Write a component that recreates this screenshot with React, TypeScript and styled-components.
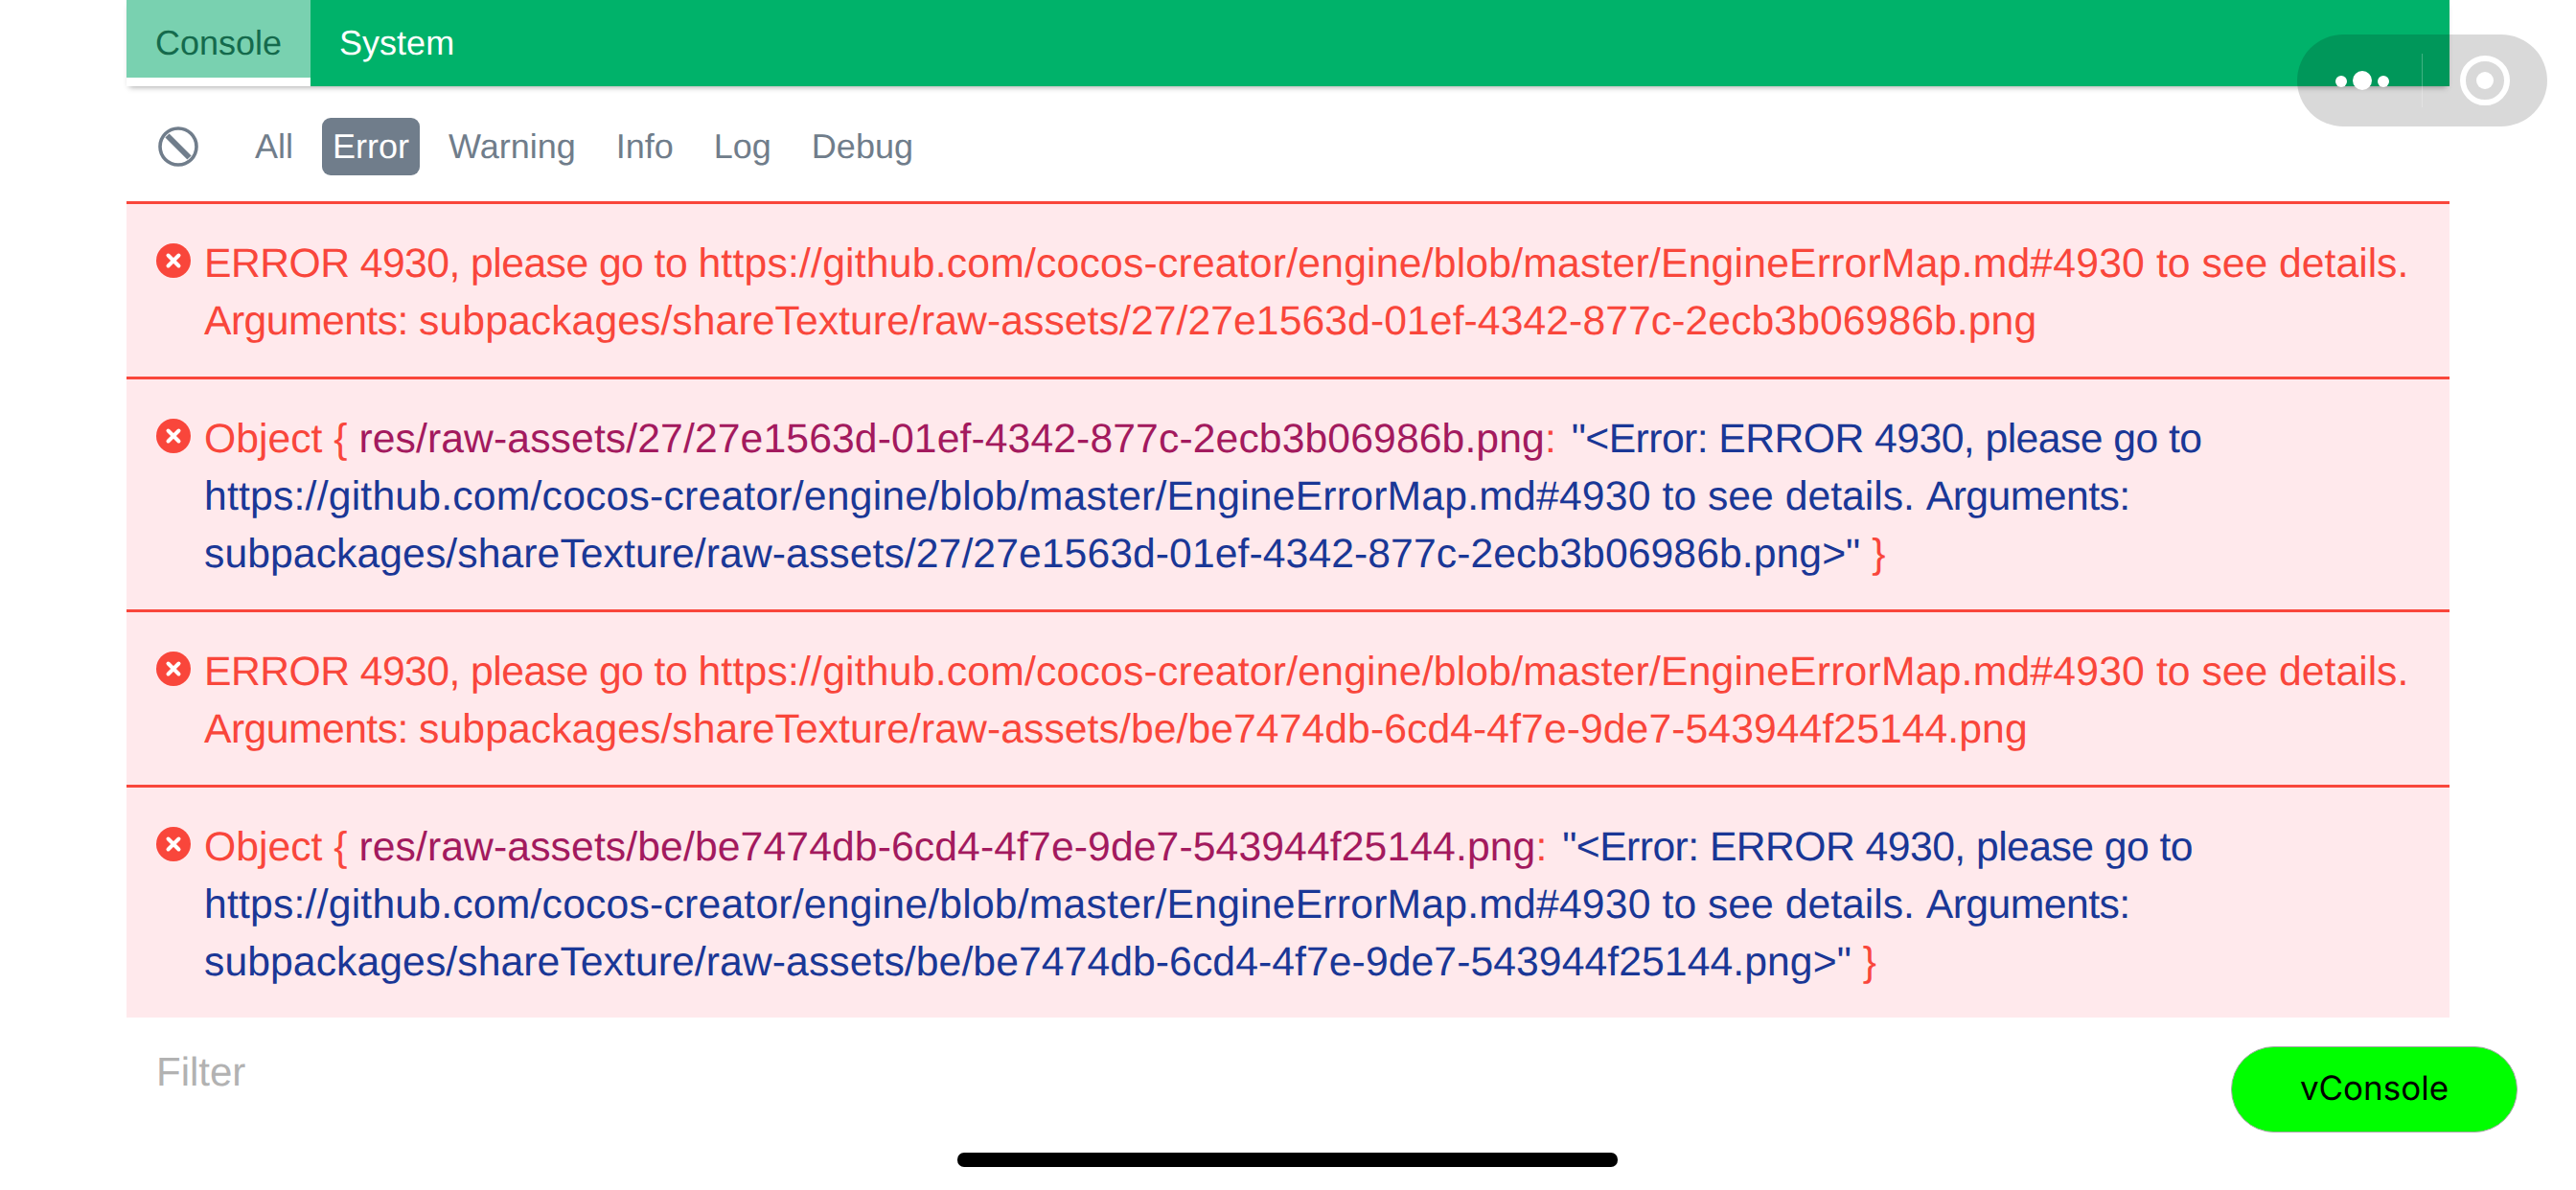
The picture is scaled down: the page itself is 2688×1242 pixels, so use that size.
import React from "react";
import styled, { createGlobalStyle } from "styled-components";

const GlobalStyle = createGlobalStyle`
  html, body {
    margin: 0;
    padding: 0;
    background: #fff;
  }
  body {
    font-family: "Liberation Sans", Arial, sans-serif;
    text-rendering: geometricPrecision;
    overflow: hidden;
  }
`;

const LEVELS = ["All", "Error", "Warning", "Info", "Log", "Debug"];
const GITHUB = "https://github.com/cocos-creator/engine/blob/master/EngineErrorMap.md#4930";

function ErrorIcon() {
  return (
    <RowIcon viewBox="0 0 36 36">
      <circle cx="18" cy="18" r="18" fill="#f9463b" />
      <path d="M12.5 12.5 L23.5 23.5 M23.5 12.5 L12.5 23.5" stroke="#fff" strokeWidth="4" strokeLinecap="round" />
    </RowIcon>
  );
}

function ClearIcon() {
  return (
    <ClearSvg viewBox="0 0 42 42">
      <circle cx="21" cy="21" r="19" fill="none" stroke="#707d8b" strokeWidth="3.6" />
      <path d="M9.5 9.5 L32.5 32.5" stroke="#707d8b" strokeWidth="6" />
    </ClearSvg>
  );
}

function PlainRow({ asset }: { asset: string }) {
  return (
    <Row>
      <ErrorIcon />
      <RowText>
        <Tight>ERROR 4930, please go to </Tight>
        <Loose>{GITHUB}</Loose> to see details.
        <br />
        <Tight>Arguments: </Tight>
        <AssetPath>subpackages/shareTexture/raw-assets/{asset}</AssetPath>
      </RowText>
    </Row>
  );
}

function ObjectRow({ asset }: { asset: string }) {
  return (
    <Row>
      <ErrorIcon />
      <RowText>
        Object {"{"} <Key>res/raw-assets/{asset}</Key>:{" "}
        <Str>
          <Tight>"&lt;Error: ERROR 4930, please go to</Tight>
          <br />
          <Loose>{GITHUB}</Loose> to see details. <Tight>Arguments:</Tight>
          <br />
          <AssetPath>subpackages/shareTexture/raw-assets/{asset}&gt;"</AssetPath>
        </Str>{" "}
        {"}"}
      </RowText>
    </Row>
  );
}

export default function App() {
  return (
    <>
      <GlobalStyle />
      <Page>
        <Panel>
          <TabBar>
            <Tab $active>Console</Tab>
            <Tab>System</Tab>
          </TabBar>
          <Toolbar>
            <ClearIcon />
            <Levels>
              {LEVELS.map((level) => (
                <Level key={level} $active={level === "Error"}>
                  {level}
                </Level>
              ))}
            </Levels>
          </Toolbar>
          <LogList>
            <PlainRow asset="27/27e1563d-01ef-4342-877c-2ecb3b06986b.png" />
            <ObjectRow asset="27/27e1563d-01ef-4342-877c-2ecb3b06986b.png" />
            <PlainRow asset="be/be7474db-6cd4-4f7e-9de7-543944f25144.png" />
            <ObjectRow asset="be/be7474db-6cd4-4f7e-9de7-543944f25144.png" />
          </LogList>
          <FilterBar>Filter</FilterBar>
        </Panel>
      </Page>

      <Capsule>
        <MenuDots viewBox="0 0 60 24">
          <circle cx="7" cy="13" r="6" fill="#fff" />
          <circle cx="29" cy="12" r="10" fill="#fff" />
          <circle cx="51" cy="13" r="6" fill="#fff" />
        </MenuDots>
        <CapsuleDivider />
        <CloseRing viewBox="0 0 52 52">
          <circle cx="26" cy="26" r="23" fill="none" stroke="#fff" strokeWidth="6" />
          <circle cx="26" cy="26" r="9" fill="#fff" />
        </CloseRing>
      </Capsule>

      <VConsoleButton>vConsole</VConsoleButton>
      <HomeIndicator />
    </>
  );
}

const Page = styled.div`
  width: 2688px;
  height: 1242px;
  padding: 0 132px;
  box-sizing: border-box;
  background: #fff;
`;

const Panel = styled.div`
  display: flex;
  flex-direction: column;
`;

const TabBar = styled.div`
  display: flex;
  height: 90px;
  background: #00b26a;
  box-shadow: 0 4px 6px -3px rgba(0, 0, 0, 0.35);
`;

const Tab = styled.div<{ $active?: boolean }>`
  box-sizing: border-box;
  padding: 0 30px;
  height: ${(p) => (p.$active ? "81px" : "90px")};
  line-height: 90px;
  font-size: 36px;
  color: ${(p) => (p.$active ? "#146a4c" : "#fff")};
  background: ${(p) => (p.$active ? "#79d1b0" : "transparent")};
  box-shadow: ${(p) => (p.$active ? "0 9px 0 #fff" : "none")};
`;

const Toolbar = styled.div`
  display: flex;
  align-items: center;
  box-sizing: border-box;
  height: 120px;
  padding: 6px 0 0 33px;
`;

const ClearSvg = styled.svg`
  width: 42px;
  height: 42px;
  flex: none;
`;

const Levels = styled.div`
  display: flex;
  margin-left: 47px;
  gap: 18px;
`;

const Level = styled.div<{ $active?: boolean }>`
  height: 60px;
  line-height: 60px;
  padding: 0 ${(p) => (p.$active ? "11px" : "12px")};
  border-radius: 9px;
  font-size: 36px;
  color: ${(p) => (p.$active ? "#fff" : "#707d8b")};
  background: ${(p) => (p.$active ? "#707d8b" : "transparent")};
`;

const LogList = styled.div`
  display: flex;
  flex-direction: column;
`;

const Row = styled.div`
  display: flex;
  align-items: flex-start;
  padding: 30px 30px 30px 31px;
  border-top: 3px solid #f9463b;
  background: #ffe9ec;
`;

const RowIcon = styled.svg`
  width: 36px;
  height: 36px;
  flex: none;
  margin-top: 11px;
  margin-right: 14px;
`;

const RowText = styled.div`
  position: relative;
  top: 2px;
  font-size: 42.7px;
  line-height: 60px;
  color: #f9463b;
  white-space: nowrap;
`;

const Tight = styled.span`
  letter-spacing: -0.55px;
`;

const Loose = styled.span`
  letter-spacing: 0.2px;
`;

const AssetPath = styled.span`
  letter-spacing: 0.07px;
`;

const Key = styled.span`
  letter-spacing: 0.1px;
  color: #a31a5e;
`;

const Str = styled.span`
  margin-left: 4px;
  color: #1a3796;
`;

const FilterBar = styled.div`
  padding: 33px 31px 0;
  font-size: 42px;
  line-height: 48px;
  color: #b2b2b2;
`;

const Capsule = styled.div`
  position: absolute;
  left: 2397px;
  top: 36px;
  width: 261px;
  height: 96px;
  border-radius: 48px;
  background: rgba(0, 0, 0, 0.15);
`;

const MenuDots = styled.svg`
  position: absolute;
  left: 39px;
  top: 36px;
  width: 60px;
  height: 24px;
`;

const CapsuleDivider = styled.div`
  position: absolute;
  left: 130px;
  top: 20px;
  width: 1px;
  height: 56px;
  background: rgba(255, 255, 255, 0.25);
`;

const CloseRing = styled.svg`
  position: absolute;
  left: 170px;
  top: 22px;
  width: 52px;
  height: 52px;
`;

const VConsoleButton = styled.div`
  position: absolute;
  left: 2328px;
  top: 1092px;
  box-sizing: border-box;
  width: 299px;
  height: 90px;
  border-radius: 45px;
  border: 1.5px solid #a8a8a8;
  background: #00ff00;
  color: #000;
  font-family: Inter, "Liberation Sans", sans-serif;
  font-size: 35px;
  line-height: 87px;
  text-align: center;
`;

const HomeIndicator = styled.div`
  position: absolute;
  left: 999px;
  top: 1203px;
  width: 689px;
  height: 15px;
  border-radius: 7px;
  background: #000;
`;
